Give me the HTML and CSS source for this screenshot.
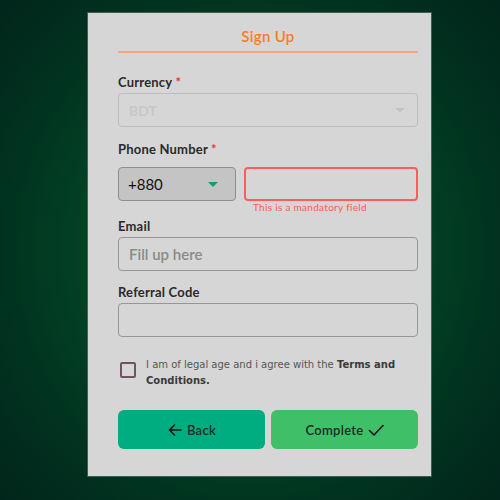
FILE: index.html
```html
<!DOCTYPE html>
<html>
<head>
<meta charset="utf-8">
<link rel="stylesheet" href="styles.css">
</head>
<body>
<div class="card">
  <div class="title">Sign Up</div>
  <div class="field">
    <label class="label">Currency <span class="req">*</span></label>
    <div class="select disabled"><span>BDT</span><span class="caret grey"></span></div>
  </div>
  <div class="field phone">
    <label class="label">Phone Number <span class="req">*</span></label>
    <div class="phone-row">
      <div class="prefix"><span>+880</span><span class="caret green"></span></div>
      <div class="phone-col">
        <div class="input error"></div>
        <div class="err-msg">This is a mandatory field</div>
      </div>
    </div>
  </div>
  <div class="field email">
    <label class="label">Email</label>
    <div class="input"><span class="ph">Fill up here</span></div>
  </div>
  <div class="field">
    <label class="label">Referral Code</label>
    <div class="input"></div>
  </div>
  <div class="agree">
    <span class="checkbox"></span>
    <p class="agree-text">I am of legal age and i agree with the <b>Terms and</b> <b>Conditions.</b></p>
  </div>
  <div class="actions">
    <button class="btn back">
      <svg width="16" height="16" viewBox="0 0 16 16"><path d="M14 8H2.5M7.5 3 2.5 8l5 5" fill="none" stroke="#111" stroke-width="1.6" stroke-linecap="round" stroke-linejoin="round"/></svg>
      <span>Back</span>
    </button>
    <button class="btn complete">
      <span>Complete</span>
      <svg width="16" height="16" viewBox="0 0 16 16"><path d="M1.5 8.5 6 13 15 3.5" fill="none" stroke="#111" stroke-width="1.6" stroke-linecap="round" stroke-linejoin="round"/></svg>
    </button>
  </div>
</div>
</body>
</html>
```

FILE: styles.css
```css
html, body {
  margin: 0;
  height: 100%;
}
body {
  background: radial-gradient(ellipse 70% 75% at 50% 50%, #02582c 0%, #024a26 35%, #013320 70%, #01241a 100%);
  font-family: Lato, "Noto Sans", sans-serif;
  padding-top: 13px;
  box-sizing: border-box;
}
.card {
  width: 343px;
  height: 463px;
  margin-left: 88px;
  box-sizing: border-box;
  background: #d6d6d6;
  padding: 0 13px 0 30px;
  box-shadow: 0 0 0 1px rgba(160, 190, 170, 0.35);
}
.title {
  text-align: center;
  color: #ff7a1c;
  font-size: 15px;
  font-weight: 600;
  letter-spacing: 0.3px;
  height: 38px;
  line-height: 46px;
  border-bottom: 2px solid #f9a37c;
  margin-bottom: 20px;
}
.field {
  margin-bottom: 13px;
}
.label {
  display: block;
  font-size: 13px;
  font-weight: 700;
  color: #2a2a2a;
  letter-spacing: 0.2px;
  line-height: 16px;
  padding-top: 1px;
  margin-bottom: 3px;
}
.phone .label {
  margin-bottom: 10px;
}
.req {
  color: #f0343c;
}
.select {
  height: 34px;
  box-sizing: border-box;
  border: 1px solid #bdbdbd;
  border-radius: 4px;
  display: flex;
  align-items: center;
  justify-content: space-between;
  padding: 0 12px 0 10px;
  font-size: 14px;
  font-weight: 700;
  color: #c8c8c8;
}
.caret {
  width: 0;
  height: 0;
  border-left: 5px solid transparent;
  border-right: 5px solid transparent;
  border-top: 5px solid #c4c4c4;
}
.caret.green {
  border-top-color: #0f9e74;
}
.phone-row {
  display: flex;
  gap: 8px;
}
.prefix {
  width: 118px;
  height: 34px;
  box-sizing: border-box;
  border: 1px solid #8f8f8f;
  border-radius: 4px;
  background: #c4c4c4;
  display: flex;
  align-items: center;
  justify-content: space-between;
  padding: 0 17px 0 9px;
  font-size: 15px;
  color: #111;
}
.phone-col {
  flex: 1;
}
.input {
  height: 34px;
  box-sizing: border-box;
  border: 1px solid #969696;
  border-radius: 4px;
  display: flex;
  align-items: center;
  padding: 0 10px;
}
.input.error {
  border: 2px solid #ff5c5c;
}
.err-msg {
  color: #ff5a5a;
  font-size: 10px;
  letter-spacing: 0.3px;
  margin: 0 0 0 9px;
  line-height: 12px;
}
.phone {
  margin-bottom: 4px;
}
.email {
  margin-bottom: 12px;
}
.ph {
  color: #8a8a8a;
  font-size: 15px;
  font-weight: 600;
}
.agree {
  display: flex;
  align-items: flex-start;
  gap: 10px;
  margin-top: 20px;
  padding-left: 2px;
}
.checkbox {
  flex: none;
  width: 12px;
  height: 12px;
  border: 2px solid #6e5460;
  border-radius: 2px;
  margin-top: 5px;
}
.agree-text {
  margin: 0;
  font-family: "DejaVu Sans", sans-serif;
  font-size: 10px;
  line-height: 16px;
  color: #555;
}
.agree-text b {
  color: #3a3a3a;
}
.actions {
  display: flex;
  gap: 6px;
  margin-top: 21px;
}
.btn {
  flex: 1;
  height: 39px;
  border: none;
  border-radius: 6px;
  display: flex;
  align-items: center;
  justify-content: center;
  gap: 4px;
  font-family: Lato, sans-serif;
  font-size: 13px;
  font-weight: 600;
  color: #1a2a26;
  letter-spacing: 0.3px;
}
.back {
  background: #00ad80;
}
.complete {
  background: #3fc068;
}
```
